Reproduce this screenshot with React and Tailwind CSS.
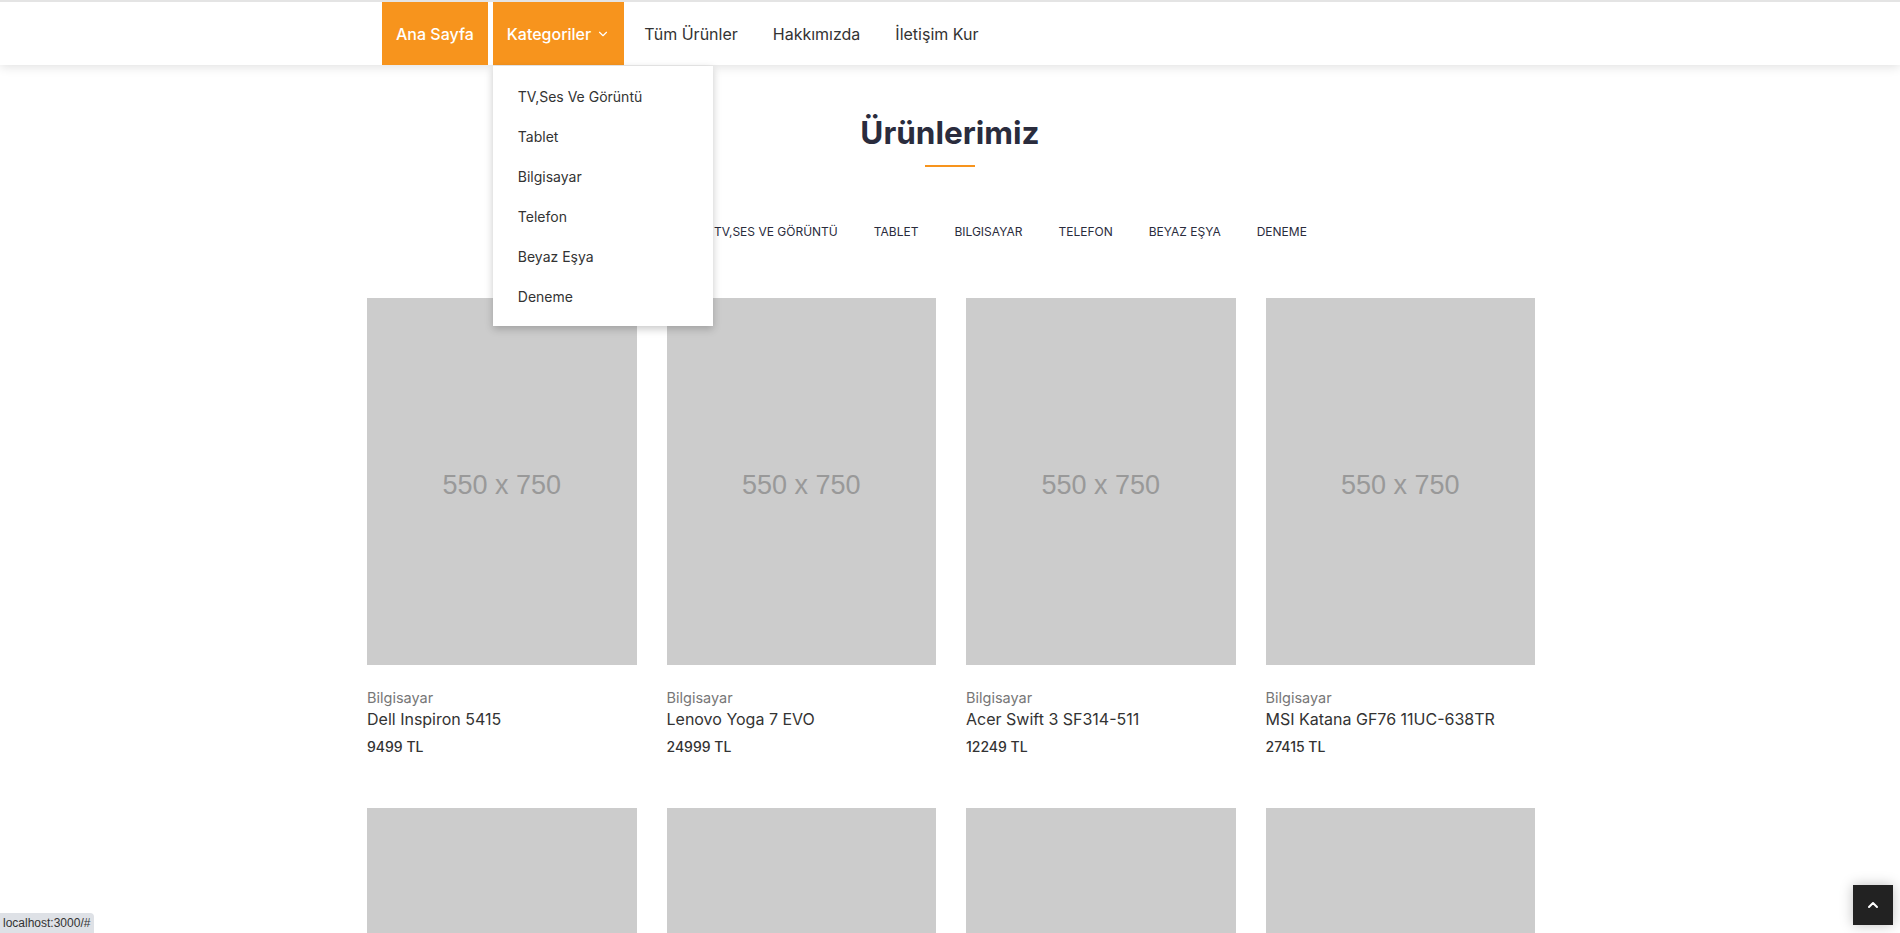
import React from 'react';
import { ChevronDown, ChevronUp } from 'lucide-react';

const menu = ['Tüm Ürünler', 'Hakkımızda', 'İletişim Kur'];
const categories = ['TV,Ses Ve Görüntü', 'Tablet', 'Bilgisayar', 'Telefon', 'Beyaz Eşya', 'Deneme'];
const filters = ['TV,Ses Ve Görüntü', 'Tablet', 'Bilgisayar', 'Telefon', 'Beyaz Eşya', 'Deneme'];

const products = [
    { category: 'Bilgisayar', name: 'Dell Inspiron 5415', price: 9499 },
    { category: 'Bilgisayar', name: 'Lenovo Yoga 7 EVO', price: 24999 },
    { category: 'Bilgisayar', name: 'Acer Swift 3 SF314-511', price: 12249 },
    { category: 'Bilgisayar', name: 'MSI Katana GF76 11UC-638TR', price: 27415 },
    { category: 'Telefon', name: 'Samsung Galaxy S21', price: 13999 },
    { category: 'Telefon', name: 'iPhone 13', price: 15499 },
    { category: 'Tablet', name: 'iPad Air', price: 9999 },
    { category: 'Tablet', name: 'Galaxy Tab S7', price: 8799 },
];

function ProductCard({ product }) {
    return (
        <div className="flex flex-col">
            {/* placeholder image */}
            <div className="h-[367px] bg-[#cccccc] flex items-center justify-center pt-[7px]">
                <span className="font-['Liberation_Sans',Arial,sans-serif] text-[27px] text-[#999999]">550 x 750</span>
            </div>
            <p className="mt-[23px] text-[14.5px] leading-[20px] text-[#777777]">{product.category}</p>
            <p className="text-[16px] leading-[22px] text-[#333333]">{product.name}</p>
            <p className="mt-[7px] text-[14px] leading-[20px] font-medium text-[#333333]">{product.price} TL</p>
        </div>
    );
}

export default function App() {
    return (
        <div className="min-h-screen bg-white font-['Inter',sans-serif]">
            {/* Header */}
            <header className="relative z-20 bg-white border-t-2 border-[#e4e4e4] shadow-[0_2px_10px_rgba(0,0,0,0.12)]">
                <div className="w-[1170px] mx-auto">
                    <ul className="flex gap-[5px] pl-[17px]">
                        <li className="h-[63px] flex items-center px-[14px] bg-[#f7941d] text-white text-[16px] font-medium">Ana Sayfa</li>
                        <li className="relative h-[63px] flex items-center gap-[5px] px-[14px] bg-[#f7941d] text-white text-[16px] font-medium">
                            Kategoriler
                            <ChevronDown size={14} strokeWidth={2} />
                            {/* Dropdown */}
                            <div className="absolute top-[64px] left-0 w-[220px] py-[10px] bg-white shadow-[0_3px_8px_rgba(0,0,0,0.22)]">
                                {categories.map(c => (
                                    <div key={c} className="h-10 flex items-center px-[25px] text-[14px] font-normal text-[#333333]">{c}</div>
                                ))}
                            </div>
                        </li>
                        {menu.map(m => (
                            <li key={m} className="h-[63px] flex items-center px-[15px] text-[16px] text-[#333333]">{m}</li>
                        ))}
                    </ul>
                </div>
            </header>

            <main className="w-[1170px] mx-auto">
                {/* Title */}
                <div className="mt-[45px] flex flex-col items-center">
                    <h2 className="text-[31.5px] leading-[45px] font-bold text-[#2a2c3d]">Ürünlerimiz</h2>
                    <div className="mt-[10px] w-[50px] h-[2px] bg-[#f7941d]"></div>
                </div>

                {/* Filters */}
                <ul className="mt-[55px] flex justify-center gap-[36px]">
                    <li className="w-[85px] text-center whitespace-nowrap text-[12px] leading-[20px] uppercase text-[#2a2c3d]">Tümü</li>
                    {filters.map(f => (
                        <li key={f} className="text-[12px] leading-[20px] uppercase text-[#2a2c3d]">{f}</li>
                    ))}
                </ul>

                {/* Products */}
                <div className="mt-[56px] ml-[2px] grid grid-cols-4 gap-x-[30px] gap-y-[51px]">
                    {products.map((p, i) => (
                        <ProductCard key={i} product={p} />
                    ))}
                </div>
            </main>

            {/* Back to top */}
            <button className="fixed right-[7px] bottom-[8px] w-10 h-10 bg-[#222222] text-white flex items-center justify-center shadow-[0_0_12px_rgba(0,0,0,0.25)]">
                <ChevronUp size={16} strokeWidth={3} />
            </button>

            {/* browser status bubble */}
            <div className="fixed left-0 bottom-0 h-5 pl-[3px] pr-[4px] flex items-center bg-[#dee1e6] rounded-tr-[4px] font-['Liberation_Sans',Arial,sans-serif] text-[12px] text-[#333333]">
                localhost:3000/#
            </div>
        </div>
    );
}
